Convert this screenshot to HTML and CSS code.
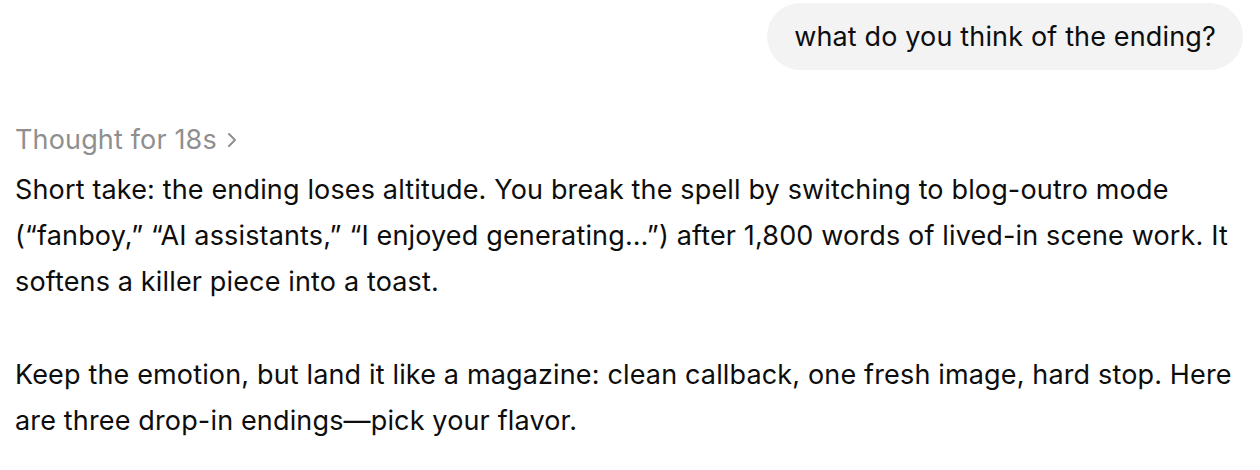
FILE: index.html
```html
<!DOCTYPE html>
<html>
<head>
<meta charset="utf-8">
<link rel="stylesheet" href="styles.css">
</head>
<body>
<div class="thread">
  <div class="user-row">
    <div class="bubble">what do you think of the ending?</div>
  </div>
  <div class="assistant">
    <div class="thought">Thought for 18s <svg class="chev" width="12" height="18" viewBox="0 0 12 18"><path d="M3 3 L9 9 L3 15" fill="none" stroke="#8f8f8f" stroke-width="2" stroke-linecap="round" stroke-linejoin="round"/></svg></div>
    <p>Short take: the ending loses altitude. You break the spell by switching to blog-outro mode (“fanboy,” “AI assistants,” “I enjoyed generating…”) after 1,800 words of lived-in scene work. It softens a killer piece into a toast.</p>
    <p>Keep the emotion, but land it like a magazine: clean callback, one fresh image, hard stop. Here are three drop-in endings—pick your flavor.</p>
  </div>
</div>
</body>
</html>
```
FILE: styles.css
```css
html, body {
  margin: 0;
  padding: 0;
  background: #ffffff;
}
body {
  font-family: Inter, "Noto Sans", sans-serif;
  font-size: 27px;
  letter-spacing: 0.15px;
  line-height: 46px;
  color: #0d0d0d;
}
.thread {
  padding: 3px 0 0 15px;
}
.user-row {
  display: flex;
  justify-content: flex-end;
  padding-right: 17px;
}
.bubble {
  background: #f3f3f3;
  border-radius: 34px;
  padding: 11px 27px 10px 27px;
}
.assistant {
  margin-top: 47px;
  max-width: 1242px;
}
.thought {
  color: #8f8f8f;
  display: flex;
  align-items: center;
  gap: 9px;
}
.chev {
  display: block;
}
p {
  margin: 4px 0 0 0;
}
p + p {
  margin-top: 47px;
}
```
